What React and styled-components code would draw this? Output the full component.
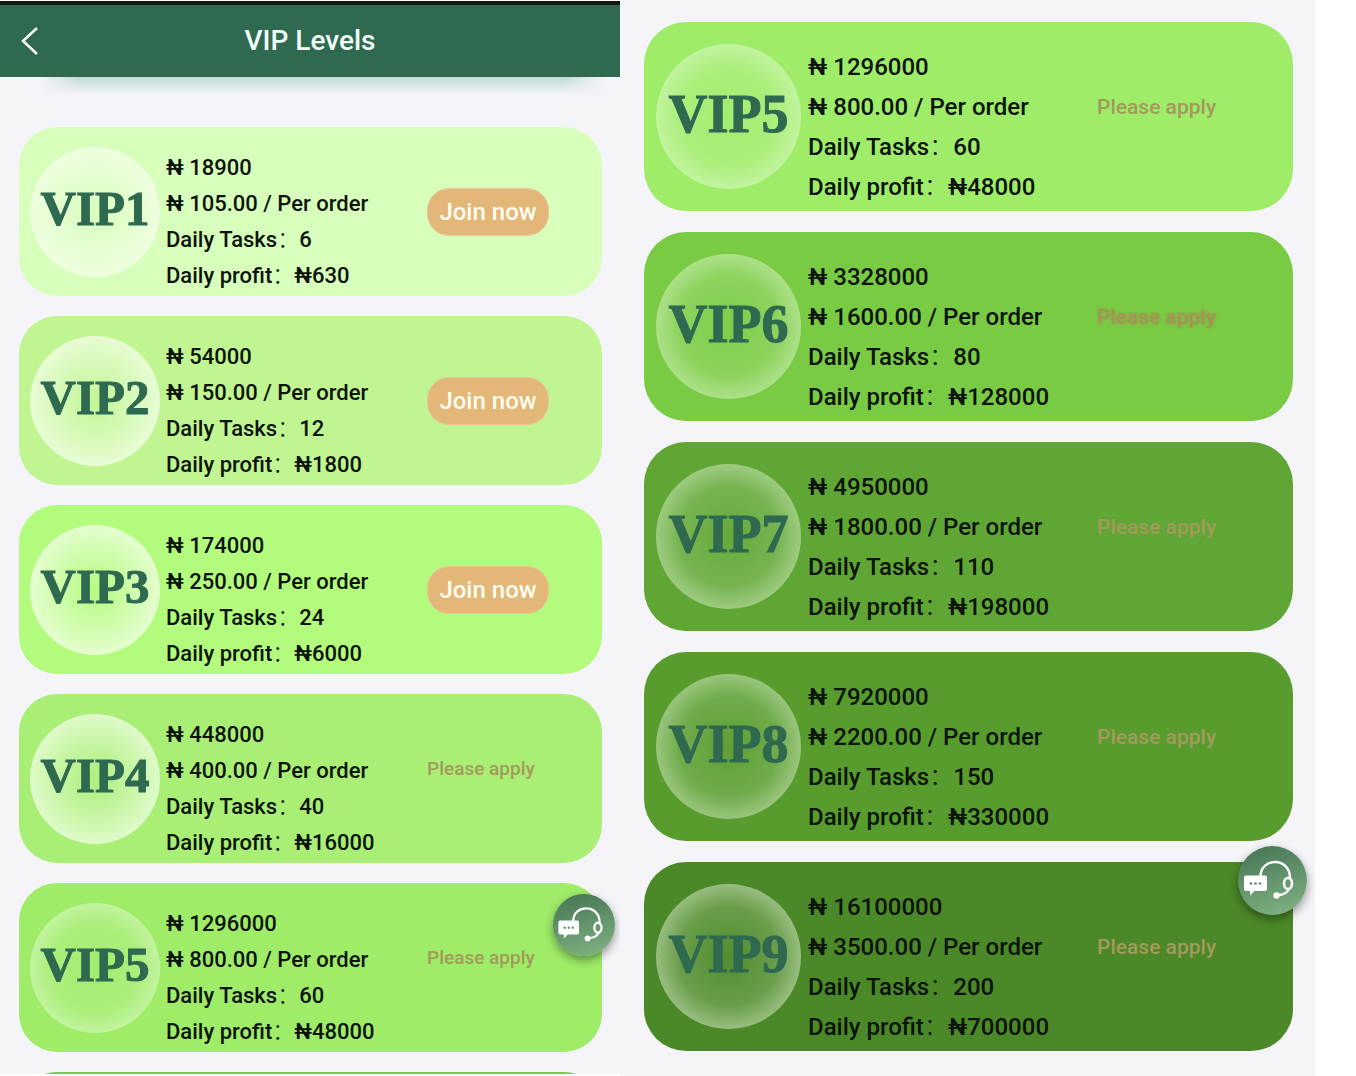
import styled, { createGlobalStyle, ThemeProvider } from "styled-components";

const firstLevels = [
  { id: 1, price: "18900", perOrder: "105.00", tasks: 6, profit: "630", color: "#d8febb", glow: 0.75, open: true },
  { id: 2, price: "54000", perOrder: "150.00", tasks: 12, profit: "1800", color: "#c0f591", glow: 0.75, open: true },
  { id: 3, price: "174000", perOrder: "250.00", tasks: 24, profit: "6000", color: "#b3fb7c", glow: 0.75, open: true },
  { id: 4, price: "448000", perOrder: "400.00", tasks: 40, profit: "16000", color: "#a9ef76", glow: 0.72 },
  { id: 5, price: "1296000", perOrder: "800.00", tasks: 60, profit: "48000", color: "#9eec68", glow: 0.42 },
];

const nextLevels = [
  { id: 5, price: "1296000", perOrder: "800.00", tasks: 60, profit: "48000", color: "#9eec68", glow: 0.42 },
  { id: 6, price: "3328000", perOrder: "1600.00", tasks: 80, profit: "128000", color: "#79cb43", glow: 0.42, faded: true },
  { id: 7, price: "4950000", perOrder: "1800.00", tasks: 110, profit: "198000", color: "#5fa634", glow: 0.42 },
  { id: 8, price: "7920000", perOrder: "2200.00", tasks: 150, profit: "330000", color: "#579c2d", glow: 0.42 },
  { id: 9, price: "16100000", perOrder: "3500.00", tasks: 200, profit: "700000", color: "#4b8827", glow: 0.45 },
];

const small = {
  listPadding: "50px 18px 0 19px",
  gap: 20,
  radius: 38,
  cardHeight: 169,
  cardIndent: 11,
  badge: 130,
  badgeFont: 49,
  infoGap: 6,
  font: 22,
  line: 36,
  action: 175,
  applyFont: 19,
};

const large = {
  listPadding: "22px 22px 0 24px",
  gap: 21,
  radius: 42,
  cardHeight: 189,
  cardIndent: 12,
  badge: 145,
  badgeFont: 54,
  infoGap: 7,
  font: 24,
  line: 40,
  action: 196,
  applyFont: 21,
};

function SupportIcon() {
  return (
    <svg viewBox="0 0 69 69" width="100%" height="100%" fill="none" aria-hidden="true">
      <path d="M22.500 30C23 11 52 11 52 32" stroke="#fff" strokeWidth="2.400" />
      <ellipse cx="50" cy="37.500" rx="4" ry="5.500" stroke="#fff" strokeWidth="2.600" />
      <path d="M51 43C49 47 45 49 40 49" stroke="#fff" strokeWidth="2.400" />
      <circle cx="38.500" cy="49.500" r="3.200" fill="#fff" />
      <path d="M8 29.500h19a2 2 0 0 1 2 2V43a2 2 0 0 1-2 2H16.500L12 49.500V45H8a2 2 0 0 1-2-2V31.500a2 2 0 0 1 2-2z" fill="#fff" />
      <g fill="#5d8a66">
        <circle cx="13" cy="37.500" r="1.300" />
        <circle cx="17.500" cy="37.500" r="1.300" />
        <circle cx="22" cy="37.500" r="1.300" />
      </g>
    </svg>
  );
}

function LevelCard({ level }) {
  return (
    <Card $color={level.color}>
      <Badge $glow={level.glow}>VIP{level.id}</Badge>
      <Info>
        <li>₦ {level.price}</li>
        <li>₦ {level.perOrder} / Per order</li>
        <li>
          Daily Tasks<Colon>{"\uff1a"}</Colon>
          {level.tasks}
        </li>
        <li>
          Daily profit<Colon>{"\uff1a"}</Colon>₦{level.profit}
        </li>
      </Info>
      <Action>
        {level.open ? (
          <JoinButton type="button">Join now</JoinButton>
        ) : (
          <ApplyButton type="button" $faded={level.faded}>
            Please apply
          </ApplyButton>
        )}
      </Action>
    </Card>
  );
}

function App() {
  return (
    <>
      <GlobalStyle />
      <Page>
        <ThemeProvider theme={small}>
          <FirstScreen>
            <Header>
              <BackButton type="button" aria-label="Back">
                <svg viewBox="0 0 18 30" width="18" height="30" fill="none" aria-hidden="true">
                  <path d="M16 2L2 15L16 28" stroke="#fff" strokeWidth="2.500" />
                </svg>
              </BackButton>
              <Title>VIP Levels</Title>
            </Header>
            <List>
              {firstLevels.map((level) => (
                <LevelCard key={level.id} level={level} />
              ))}
              <NextCardEdge />
            </List>
            <SupportButton type="button" aria-label="Support" $size={62} $right={5} $bottom={118}>
              <SupportIcon />
            </SupportButton>
          </FirstScreen>
        </ThemeProvider>
        <ThemeProvider theme={large}>
          <Screen>
            <List>
              {nextLevels.map((level) => (
                <LevelCard key={level.id} level={level} />
              ))}
            </List>
            <SupportButton type="button" aria-label="Support" $size={69} $right={8} $bottom={161}>
              <SupportIcon />
            </SupportButton>
          </Screen>
        </ThemeProvider>
      </Page>
    </>
  );
}

export default App;

const GlobalStyle = createGlobalStyle`
  * {
    box-sizing: border-box;
  }
  body {
    margin: 0;
    background: #fff;
    font-family: Roboto, "Noto Sans CJK SC", sans-serif;
  }
  button {
    font-family: inherit;
    border: 0;
    padding: 0;
    background: none;
    cursor: pointer;
  }
`;

const Page = styled.main`
  display: grid;
  grid-template-columns: 620fr 695fr 41fr;
  min-height: 100vh;
`;

const Screen = styled.section`
  position: relative;
  min-width: 0;
  background: #f4f4f9;
`;

const FirstScreen = styled(Screen)`
  margin: 1px 0 2px;
`;

const Header = styled.header`
  position: relative;
  display: grid;
  grid-template-columns: 60px 1fr 60px;
  align-items: center;
  height: 76px;
  border-top: 4px solid #15170f;
  background: #2e6950;

  &::after {
    content: "";
    position: absolute;
    top: 100%;
    left: 40px;
    right: 16px;
    height: 18px;
    background: linear-gradient(rgba(46, 140, 115, 0.26), rgba(46, 140, 115, 0));
    mask-image: linear-gradient(90deg, transparent, #000 40px, #000 calc(100% - 40px), transparent);
  }
`;

const BackButton = styled.button`
  display: flex;
  justify-content: center;
`;

const Title = styled.h1`
  margin: 0;
  color: #f2fffa;
  font-size: 28px;
  font-weight: 500;
  line-height: 32px;
  text-align: center;
`;

const List = styled.div`
  display: flex;
  flex-direction: column;
  gap: ${(props) => props.theme.gap}px;
  padding: ${(props) => props.theme.listPadding};
`;

const Card = styled.article`
  display: flex;
  align-items: center;
  min-height: ${(props) => props.theme.cardHeight}px;
  padding-left: ${(props) => props.theme.cardIndent}px;
  border-radius: ${(props) => props.theme.radius}px;
  background: ${(props) => props.$color};
`;

const Badge = styled.div`
  display: flex;
  flex: none;
  align-items: center;
  justify-content: center;
  width: ${(props) => props.theme.badge}px;
  height: ${(props) => props.theme.badge}px;
  padding-bottom: 6px;
  border-radius: 50%;
  background: radial-gradient(
    closest-side,
    rgba(245, 255, 235, 0.04),
    rgba(245, 255, 235, ${(props) => props.$glow * props.$glow * 0.9}) 68%,
    rgba(245, 255, 235, ${(props) => props.$glow})
  );
  color: #2e6950;
  font-family: "Liberation Serif", serif;
  font-size: ${(props) => props.theme.badgeFont}px;
  font-weight: bold;
  line-height: 1;
  -webkit-text-stroke: 1px #2e6950;
`;

const Info = styled.ul`
  flex: 1;
  margin: 0 0 0 ${(props) => props.theme.infoGap}px;
  padding: 20px 0 0;
  list-style: none;
  color: #0c140a;
  font-size: ${(props) => props.theme.font}px;
  font-weight: 500;
  line-height: ${(props) => props.theme.line}px;
  white-space: nowrap;
`;

const Colon = styled.span`
  font-weight: 300;
`;

const Action = styled.div`
  flex: none;
  width: ${(props) => props.theme.action}px;
`;

const JoinButton = styled.button`
  width: 122px;
  height: 48px;
  border: 1px solid #ecc795;
  border-radius: 22px;
  background: #e3b778;
  color: #fffdf0;
  font-size: 24px;
  font-weight: 500;
`;

/* sits level with the "Per order" line */
const ApplyButton = styled.button`
  display: block;
  margin-bottom: 20px;
  color: ${(props) => (props.$faded ? "rgba(167, 146, 88, 0.7)" : "#a39a5c")};
  text-shadow: ${(props) => (props.$faded ? "0 0 3px #a08c50" : "none")};
  font-size: ${(props) => props.theme.applyFont}px;
  font-weight: 500;
`;

/* top edge of the card that is still below the fold */
const NextCardEdge = styled.div`
  height: 2px;
  overflow: hidden;

  &::before {
    content: "";
    display: block;
    height: 169px;
    border-radius: ${(props) => props.theme.radius}px;
    background: #79cb43;
  }
`;

const SupportButton = styled.button`
  position: absolute;
  right: ${(props) => props.$right}px;
  bottom: ${(props) => props.$bottom}px;
  width: ${(props) => props.$size}px;
  height: ${(props) => props.$size}px;
  border-radius: 50%;
  background: linear-gradient(165deg, #4a7a58 10%, #7fb182 95%);
  box-shadow: 0 4px 10px rgba(0, 0, 0, 0.4);
`;
